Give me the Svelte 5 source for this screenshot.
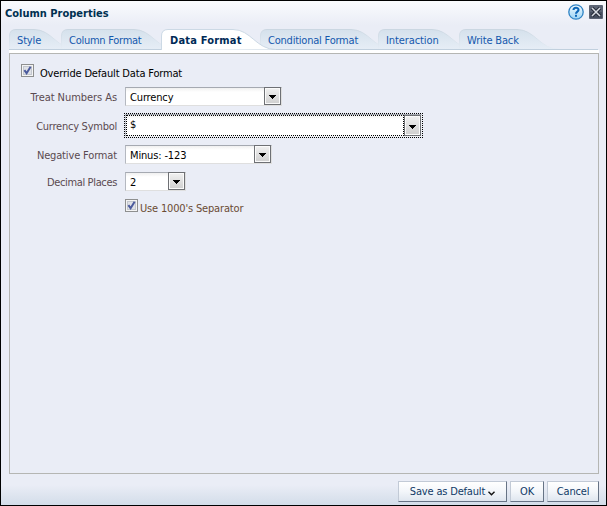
<script lang="ts">
	type Tab = { label: string; width: number; spacing: number };

	const tabs: Tab[] = [
		{ label: 'Style', width: 52, spacing: -0.15 },
		{ label: 'Column Format', width: 100, spacing: -0.26 },
		{ label: 'Data Format', width: 99, spacing: 0.2 },
		{ label: 'Conditional Format', width: 118, spacing: -0.22 },
		{ label: 'Interaction', width: 81, spacing: -0.1 },
		{ label: 'Write Back', width: 85, spacing: -0.15 }
	];

	let active = $state('Data Format');
	let override = $state(true);
	let separator = $state(true);

	function tabPath(w: number): string {
		return `M.5 21V7Q.5 .5 7 .5H${w - 27}C${w - 9} .5 ${w - 4} 20.5 ${w + 16} 20.5`;
	}
</script>

{#snippet checkmark(on: boolean)}
	<svg width="13" height="13" viewBox="0 0 13 13">
		<rect x=".5" y=".5" width="12" height="12" fill="#f4f4f4" stroke="#8e8f8f" />
		<rect x="2.5" y="2.5" width="8" height="8" fill="#dfe1e6" stroke="#c3c7ce" />
		{#if on}
			<path d="M3.4 6.2L5.6 9.2L9.6 2.8" fill="none" stroke="#4b5a9d" stroke-width="2" />
		{/if}
	</svg>
{/snippet}

{#snippet arrow()}
	<span class="arrow">
		<svg width="7" height="4" viewBox="0 0 7 4" shape-rendering="crispEdges"><path d="M0 0H7V1H6V2H5V3H4V4H3V3H2V2H1V1H0Z" /></svg>
	</span>
{/snippet}

<div class="dialog">
	<header>
		<h1>Column Properties</h1>
		<svg class="help" width="16" height="16" viewBox="0 0 16 16">
			<defs>
				<linearGradient id="helpFill" x2="0" y2="1">
					<stop offset="0" stop-color="#f3fbff" />
					<stop offset="1" stop-color="#9bd4f5" />
				</linearGradient>
			</defs>
			<circle cx="8" cy="8" r="7.2" fill="url(#helpFill)" stroke="#2f83c4" stroke-width="1.3" />
			<path d="M5.5 6.1C5.5 3 10.5 3 10.5 5.9C10.5 7.7 8 7.5 8 9.7" fill="none" stroke="#0b66b8" stroke-width="2.1" />
			<rect x="7" y="10.8" width="2" height="2" fill="#0b66b8" />
		</svg>
		<svg class="close" width="14" height="14" viewBox="0 0 14 14">
			<rect width="14" height="14" rx="1" fill="#5c6474" />
			<rect x="1" y="7" width="12" height="6" fill="#474f60" />
			<path d="M3 3L11 11M11 3L3 11" stroke="#252b38" stroke-width="3.4" />
			<path d="M3 3L11 11M11 3L3 11" stroke="#d9dde4" stroke-width="1.5" />
		</svg>
	</header>

	<nav>
		{#each tabs as tab}
			<button class="tab" class:active={active === tab.label} style:width="{tab.width}px" onclick={() => (active = tab.label)}>
				<svg width={tab.width + 17} height="21">
					<defs>
						<linearGradient id="tabFill" x2="0" y2="1">
							<stop offset="0" stop-color="#d5e1ec" />
							<stop offset="1" stop-color="#e7eef6" />
						</linearGradient>
						<linearGradient id="tabEdge" x2="0" y2="1">
							<stop offset="0" stop-color="#cbd7e2" />
							<stop offset="1" stop-color="#e7eef6" />
						</linearGradient>
					</defs>
					<path class="shape" d={tabPath(tab.width)} />
				</svg>
				<span style:letter-spacing="{tab.spacing}px">{tab.label}</span>
			</button>
		{/each}
	</nav>

	<main>
		<button class="check override" onclick={() => (override = !override)}>
			{@render checkmark(override)}
			<span>Override Default Data Format</span>
		</button>
		<div class="row">
			<span class="label treat">Treat Numbers As</span>
			<div class="select currency"><span class="value">Currency</span>{@render arrow()}</div>
		</div>
		<div class="row tall">
			<span class="label symbol">Currency Symbol</span>
			<div class="focus">
				<div class="select wide"><span class="value">$</span>{@render arrow()}</div>
			</div>
		</div>
		<div class="row">
			<span class="label negative">Negative Format</span>
			<div class="select minus"><span class="value">Minus: -123</span>{@render arrow()}</div>
		</div>
		<div class="row last">
			<span class="label decimal">Decimal Places</span>
			<div class="select places"><span class="value">2</span>{@render arrow()}</div>
		</div>
		<button class="check separator" onclick={() => (separator = !separator)}>
			{@render checkmark(separator)}
			<span>Use 1000's Separator</span>
		</button>
	</main>

	<footer>
		<button class="action save">
			<span>Save as Default</span>
			<svg width="7" height="5" viewBox="0 0 7 5"><path d="M.5 .7L3.5 3.7L6.5 .7" fill="none" stroke="#111" stroke-width="1.4" /></svg>
		</button>
		<button class="action ok"><span>OK</span></button>
		<button class="action cancel"><span>Cancel</span></button>
	</footer>
</div>

<style>
	:global(body) {
		margin: 0;
	}

	.dialog {
		box-sizing: border-box;
		width: 607px;
		height: 506px;
		border: 1px solid #000;
		display: flex;
		flex-direction: column;
		background: linear-gradient(#fafbfd 0, #eaedf6 24px, #eaedf6 484px, #d3dde9 100%);
		font-family: 'DejaVu Sans Condensed', 'DejaVu Sans', sans-serif;
		font-stretch: condensed;
		font-size: 11px;
		line-height: 14px;
		white-space: nowrap;
	}

	button {
		margin: 0;
		padding: 0;
		border: 0;
		background: none;
		font: inherit;
		color: inherit;
	}

	svg {
		display: block;
		flex: none;
	}

	header {
		height: 28px;
		display: flex;
		align-items: flex-start;
		padding: 0 3px 0 4px;
	}

	h1 {
		flex: 1;
		margin: 6px 0 0;
		font-size: 11px;
		line-height: 14px;
		color: #003050;
	}

	.help {
		margin: 3px 5px 0 0;
	}

	.close {
		margin-top: 4px;
	}

	nav {
		height: 20px;
		display: flex;
		margin: 0 8px;
		border-bottom: 1px solid #c1d0de;
	}

	.tab {
		position: relative;
		height: 21px;
		flex: none;
		padding: 2px 0 0 8px;
		text-align: left;
		color: #1458ad;
	}

	.tab svg {
		position: absolute;
		left: 0;
		top: 0;
		pointer-events: none;
	}

	.tab span {
		position: relative;
	}

	.shape {
		fill: url(#tabFill);
		stroke: url(#tabEdge);
	}

	.tab:not(.active) svg {
		height: 20px;
	}

	.active {
		z-index: 1;
		padding-left: 9px;
		color: #002a56;
		font-weight: bold;
	}

	.active .shape {
		fill: #fff;
		stroke: #ccd9e5;
	}

	main {
		flex: 1;
		margin: 3px 7px 0 8px;
		border: 1px solid #b5b6b3;
		box-shadow: 0 -3px #fff;
		padding-top: 9px;
		display: flex;
		flex-direction: column;
		align-items: flex-start;
	}

	.check {
		display: flex;
		gap: 6px;
		height: 24px;
		padding-left: 11px;
		letter-spacing: -0.17px;
	}

	.check svg {
		margin-top: 1px;
	}

	.override {
		color: #000;
	}

	.override span {
		padding-top: 4px;
		line-height: 13px;
	}

	.row {
		display: flex;
		align-items: flex-start;
		height: 26px;
	}

	.tall {
		height: 32px;
	}

	.last {
		padding-top: 1px;
		height: 27px;
	}

	.label {
		width: 107px;
		margin-right: 8px;
		padding-top: 4px;
		text-align: right;
		color: #5a4a50;
	}

	.treat {
		letter-spacing: -0.06px;
	}

	.symbol {
		padding-top: 7px;
		letter-spacing: -0.25px;
	}

	/* lines the label up with the field, which sits 1px inside the focus ring */
	.tall .label {
		margin-right: 7px;
	}

	.negative {
		letter-spacing: -0.15px;
	}

	.decimal {
		letter-spacing: -0.35px;
	}

	.select {
		box-sizing: border-box;
		height: 19px;
		display: flex;
		border: 1px solid #dfdfdf;
		border-top-color: #a5a9b1;
		border-left-color: #b4b8c0;
		background: linear-gradient(#f0f0f0, #fff 4px);
		color: #000;
	}

	.value {
		flex: 1;
		padding: 3px 0 0 4px;
		letter-spacing: -0.15px;
	}

	.arrow {
		box-sizing: border-box;
		width: 17px;
		margin: -1px 0 0;
		padding-top: 2px;
		border: 1px solid #6e7074;
		box-shadow: inset 0 0 0 1px #fafafa;
		background: linear-gradient(#f1f1f1, #cfcfcf);
		display: flex;
		align-items: center;
		justify-content: center;
	}

	.currency {
		width: 157px;
	}

	.minus {
		width: 147px;
	}

	.places {
		width: 61px;
	}

	.focus {
		box-sizing: border-box;
		width: 299px;
		height: 25px;
		border: 1px dotted #000;
	}

	.wide {
		height: 23px;
		border-color: #a5a9b1 #eef0f4 #eef0f4 #c5c9d2;
	}

	.wide .value {
		padding: 2px 0 0 3px;
		line-height: 13px;
		border: 1px dotted #000;
	}

	.wide .arrow {
		margin: 0;
	}

	.separator {
		padding-left: 115px;
		gap: 2px;
		color: #6b4b33;
	}

	.separator svg {
		margin-top: 0;
	}

	.separator span {
		padding-top: 3px;
	}

	footer {
		height: 31px;
		box-sizing: border-box;
		display: flex;
		justify-content: flex-end;
		gap: 3px;
		padding: 7px 7px 3px;
	}

	.action {
		box-sizing: border-box;
		height: 21px;
		display: flex;
		align-items: center;
		justify-content: center;
		gap: 3px;
		padding-top: 1px;
		border: 1px solid #c2cad6;
		border-right-color: #667385;
		border-bottom-color: #667385;
		background: linear-gradient(#fff, #f3f6fa 50%, #dfe6ef);
		color: #103a66;
		letter-spacing: -0.18px;
	}

	.save {
		width: 109px;
	}

	.save svg {
		margin-top: 3px;
	}

	.ok {
		width: 34px;
	}

	.cancel {
		width: 52px;
	}
</style>
